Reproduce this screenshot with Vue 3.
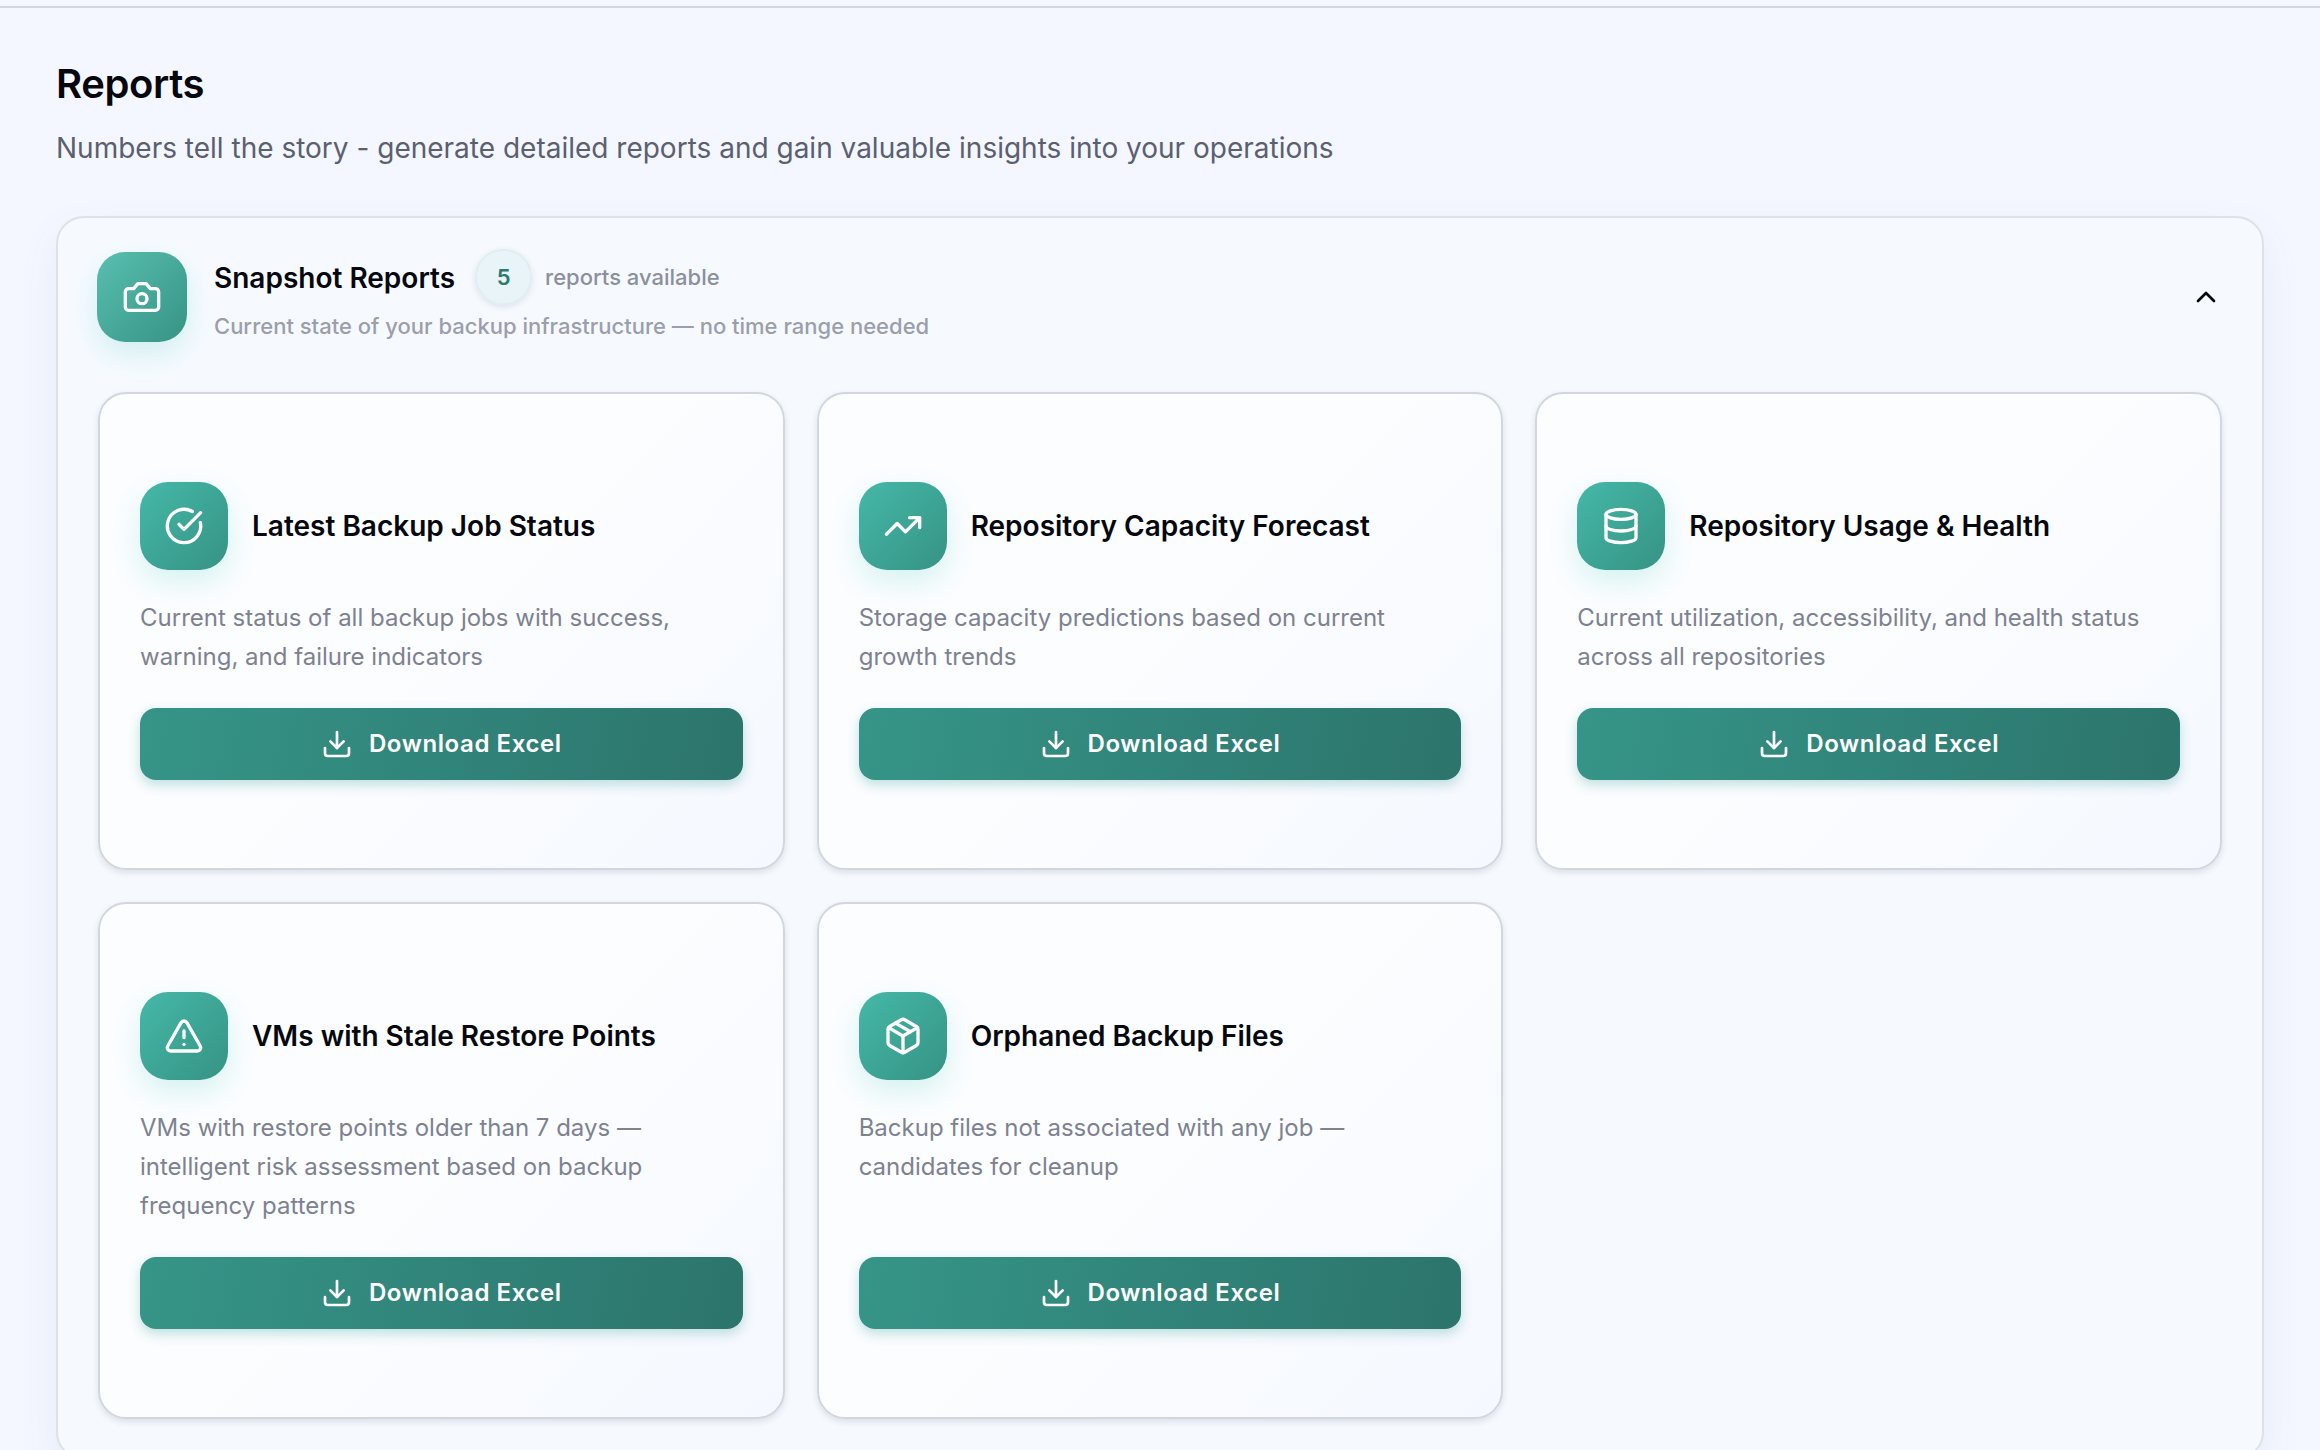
<template>
  <div class="page">
    <div class="top-line"></div>
    <main class="content">
      <h1 class="page-title">Reports</h1>
      <p class="page-desc">Numbers tell the story - generate detailed reports and gain valuable insights into your operations</p>

      <section class="panel">
        <header class="panel-header" @click="expanded = !expanded">
          <div class="icon-tile panel-icon">
            <svg viewBox="0 0 24 24" class="icon">
              <path v-for="d in icons.camera" :key="d" :d="d" />
            </svg>
          </div>
          <div class="panel-heading">
            <div class="heading-row">
              <h2>Snapshot Reports</h2>
              <span class="count">{{ reports.length }}</span>
              <span class="available">reports available</span>
            </div>
            <p class="panel-desc">Current state of your backup infrastructure — no time range needed</p>
          </div>
          <svg viewBox="0 0 24 24" class="chevron" :class="{ closed: !expanded }">
            <path d="m18 15-6-6-6 6" />
          </svg>
        </header>

        <div v-if="expanded" class="report-grid">
          <article v-for="report in reports" :key="report.title" class="report-card">
            <div class="card-head">
              <div class="icon-tile">
                <svg viewBox="0 0 24 24" class="icon">
                  <path v-for="d in icons[report.icon]" :key="d" :d="d" />
                </svg>
              </div>
              <h3>{{ report.title }}</h3>
            </div>
            <p class="card-desc">{{ report.description }}</p>
            <button type="button" class="download-btn">
              <svg viewBox="0 0 24 24" class="download-icon">
                <path v-for="d in icons.download" :key="d" :d="d" />
              </svg>
              <span>Download Excel</span>
            </button>
          </article>
        </div>
      </section>
    </main>
  </div>
</template>

<script setup>
import { ref } from 'vue'

const expanded = ref(true)

const reports = [
  {
    icon: 'check',
    title: 'Latest Backup Job Status',
    description: 'Current status of all backup jobs with success, warning, and failure indicators',
  },
  {
    icon: 'trend',
    title: 'Repository Capacity Forecast',
    description: 'Storage capacity predictions based on current growth trends',
  },
  {
    icon: 'database',
    title: 'Repository Usage & Health',
    description: 'Current utilization, accessibility, and health status across all repositories',
  },
  {
    icon: 'alert',
    title: 'VMs with Stale Restore Points',
    description: 'VMs with restore points older than 7 days — intelligent risk assessment based on backup frequency patterns',
  },
  {
    icon: 'package',
    title: 'Orphaned Backup Files',
    description: 'Backup files not associated with any job — candidates for cleanup',
  },
]

const icons = {
  camera: [
    'M14.5 4h-5L7 7H4a2 2 0 0 0-2 2v9a2 2 0 0 0 2 2h16a2 2 0 0 0 2-2V9a2 2 0 0 0-2-2h-3l-2.5-3z',
    'M9 13a3 3 0 1 0 6 0a3 3 0 1 0-6 0',
  ],
  check: ['M21.801 10A10 10 0 1 1 17 3.335', 'm9 11 3 3L22 4'],
  trend: ['M22 7 13.5 15.5 8.5 10.5 2 17', 'M16 7h6v6'],
  database: [
    'M3 5a9 3 0 1 0 18 0a9 3 0 1 0-18 0',
    'M3 5V19A9 3 0 0 0 21 19V5',
    'M3 12A9 3 0 0 0 21 12',
  ],
  alert: [
    'm21.73 18-8-14a2 2 0 0 0-3.48 0l-8 14A2 2 0 0 0 4 21h16a2 2 0 0 0 1.73-3',
    'M12 9v4',
    'M12 17h.01',
  ],
  package: [
    'M11 21.73a2 2 0 0 0 2 0l7-4A2 2 0 0 0 21 16V8a2 2 0 0 0-1-1.73l-7-4a2 2 0 0 0-2 0l-7 4A2 2 0 0 0 3 8v8a2 2 0 0 0 1 1.73z',
    'M12 22V12',
    'M3.29 7 12 12l8.71-5',
    'm7.5 4.27 9 5.15',
  ],
  download: ['M21 15v4a2 2 0 0 1-2 2H5a2 2 0 0 1-2-2v-4', 'm7 10 5 5 5-5', 'M12 15V3'],
}
</script>

<style>
body {
  background: #f4f7ff;
  overflow: hidden;
}
</style>

<style scoped>
.page {
  height: 1450px;
  padding-top: 6px;
  box-sizing: border-box;
  overflow: hidden;
  font-family: Inter, "Liberation Sans", sans-serif;
  color: #06080e;
}

.top-line {
  height: 2px;
  background: #d1d6e2;
}

.content {
  padding: 52px 56px 0;
}

h1,
h2,
h3,
p {
  margin: 0;
}

.page-title {
  font-size: 40px;
  line-height: 48px;
  font-weight: 600;
  letter-spacing: -0.4px;
}

.page-desc {
  margin-top: 20px;
  font-size: 28px;
  line-height: 40px;
  color: #5a6070;
}

.panel {
  margin-top: 48px;
  height: 1244px;
  box-sizing: border-box;
  border: 2px solid #dde1e8;
  border-radius: 28px;
  padding: 0 40px;
  background: #f6faff;
  box-shadow: 0 16px 40px rgba(70, 100, 160, 0.08);
}

.panel-header {
  display: flex;
  align-items: center;
  height: 174px;
  padding-bottom: 16px;
  box-sizing: border-box;
  cursor: pointer;
}

.icon-tile {
  display: flex;
  align-items: center;
  justify-content: center;
  flex: none;
  width: 88px;
  height: 88px;
  border-radius: 28px;
  background: linear-gradient(135deg, #45b8a8, #369384);
  box-shadow: 0 12px 28px rgba(69, 200, 184, 0.2);
}

.panel-icon {
  width: 90px;
  height: 90px;
  margin-left: -1px;
  background: linear-gradient(135deg, #58bfb0, #369384);
}

.icon {
  width: 40px;
  height: 40px;
}

.icon,
.chevron,
.download-icon {
  fill: none;
  stroke: currentColor;
  stroke-width: 2;
  stroke-linecap: round;
  stroke-linejoin: round;
}

.icon-tile .icon {
  color: #fff;
}

.panel-heading {
  margin-left: 27px;
  padding-bottom: 2px;
  flex: 1;
}

.heading-row {
  display: flex;
  align-items: center;
  height: 56px;
}

.heading-row h2 {
  padding-top: 2px;
  font-size: 28px;
  line-height: 40px;
  font-weight: 600;
}

.count {
  display: flex;
  align-items: center;
  justify-content: center;
  width: 57px;
  height: 56px;
  box-sizing: border-box;
  margin-left: 20px;
  border: 2px solid #e2edf1;
  border-radius: 28px;
  background: linear-gradient(135deg, #e8f5f7, #e9f3fa);
  color: #2c7a6f;
  font-size: 22px;
  font-weight: 600;
  box-shadow: 0 2px 6px rgba(30, 50, 80, 0.12);
}

.available {
  margin-left: 13px;
  font-size: 22px;
  font-weight: 500;
  color: #8a909d;
}

.panel-desc {
  margin-top: 4px;
  font-size: 22px;
  line-height: 34px;
  font-weight: 500;
  color: #9a9fab;
}

.chevron {
  width: 32px;
  height: 32px;
}

.chevron.closed {
  transform: rotate(180deg);
}

.report-grid {
  display: grid;
  grid-template-columns: repeat(3, 1fr);
  gap: 32px;
}

.report-card {
  display: flex;
  flex-direction: column;
  padding: 88px 40px;
  border: 2px solid #d2d6df;
  border-radius: 28px;
  background: linear-gradient(135deg, #fbfdff 0%, #fbfdff 50%, #f5f8ff 100%);
  box-shadow: 0 3px 6px rgba(30, 40, 60, 0.12);
}

.card-head {
  display: flex;
  align-items: center;
  gap: 24px;
}

.card-head h3 {
  font-size: 28px;
  line-height: 40px;
  font-weight: 600;
}

.card-desc {
  flex: 1;
  margin: 28px 0 32px;
  font-size: 24px;
  line-height: 39px;
  color: #7d8290;
}

.download-btn {
  display: flex;
  align-items: center;
  justify-content: center;
  gap: 16px;
  height: 72px;
  padding: 0 12px 1px;
  border: none;
  border-radius: 16px;
  background: linear-gradient(100deg, #369588, #2c746c);
  box-shadow: 0 5px 12px rgba(44, 150, 140, 0.28);
  color: #fff;
  font-family: inherit;
  font-size: 24px;
  font-weight: 600;
  letter-spacing: 0.6px;
  cursor: pointer;
}

.download-icon {
  width: 32px;
  height: 32px;
}
</style>
